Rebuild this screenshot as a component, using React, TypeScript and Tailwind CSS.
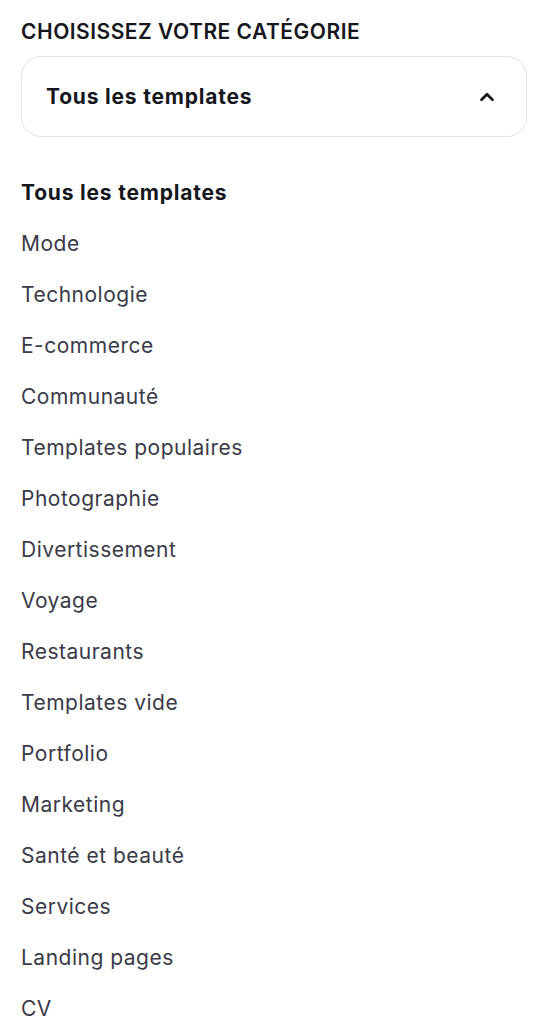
import { ChevronUp } from "lucide-react";

const categories = [
  "Mode",
  "Technologie",
  "E-commerce",
  "Communauté",
  "Templates populaires",
  "Photographie",
  "Divertissement",
  "Voyage",
  "Restaurants",
  "Templates vide",
  "Portfolio",
  "Marketing",
  "Santé et beauté",
  "Services",
  "Landing pages",
  "CV",
];

export default function App() {
  return (
    <div
      className="min-h-[1024px] bg-white px-[21px] pt-[18px] text-[#16161d]"
      style={{ fontFamily: "Inter, 'Noto Sans', sans-serif" }}
    >
      <h2 className="text-[21px] font-semibold leading-[28px] tracking-[0.5px]">
        CHOISISSEZ VOTRE CATÉGORIE
      </h2>
      <button className="mt-[10px] flex h-[81px] w-[506px] items-center justify-between rounded-[20px] border border-[#e3e3e6] pl-[24px] pr-[28px] text-left">
        <span className="text-[21px] font-bold tracking-[0.8px]">Tous les templates</span>
        <ChevronUp className="h-[22px] w-[22px]" strokeWidth={3} />
      </button>
      <ul className="mt-[30px] flex flex-col">
        <li className="h-[51px] text-[21px] font-bold leading-[51px] tracking-[0.8px]">
          Tous les templates
        </li>
        {categories.map((c) => (
          <li key={c} className="h-[51px] text-[21px] leading-[51px] tracking-[0.5px] text-[#3a3a48]">
            {c}
          </li>
        ))}
      </ul>
    </div>
  );
}
